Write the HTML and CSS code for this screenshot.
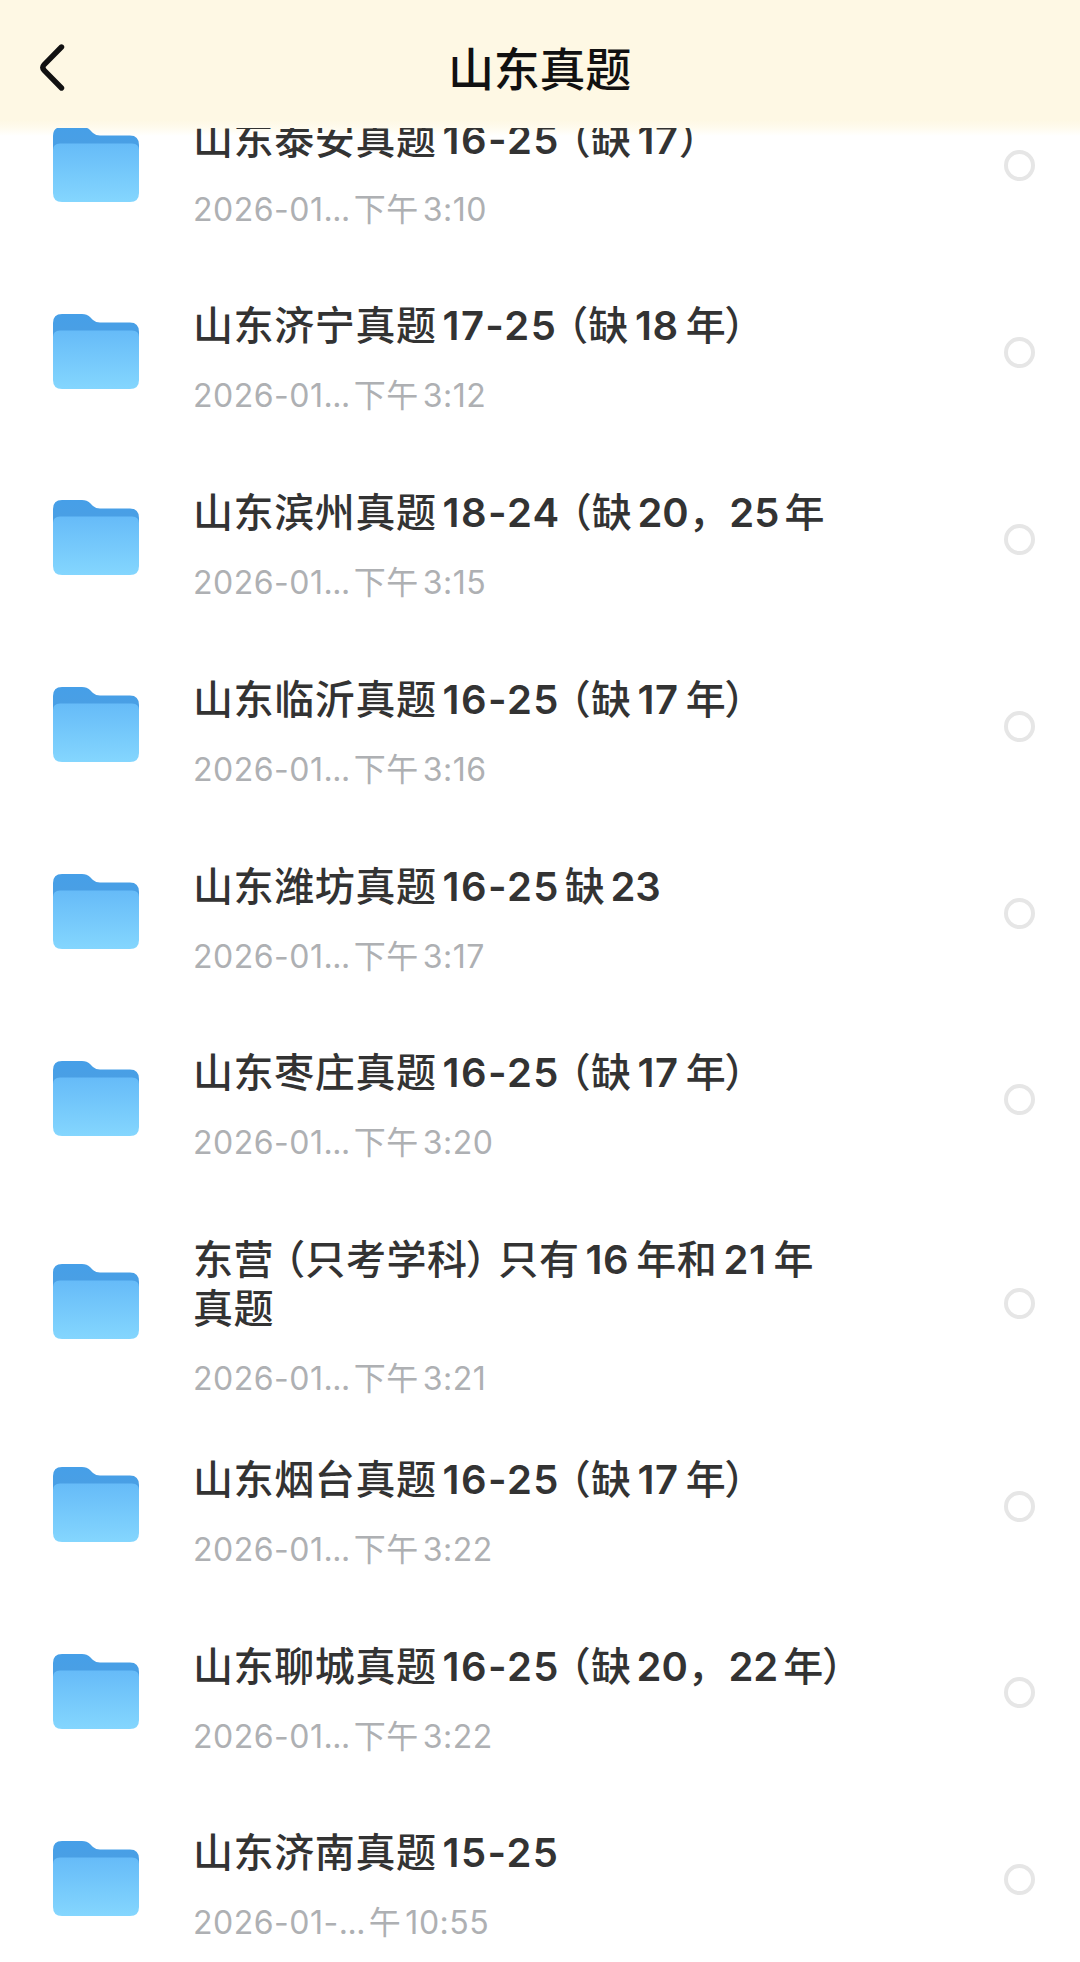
FILE: index.html
```html
<!DOCTYPE html>
<html lang="zh-CN">
<head>
    <meta charset="UTF-8">
    <meta name="viewport" content="width=device-width, initial-scale=1.0">
    <title>山东真题</title>

    <link rel="stylesheet" href="styles.css">
</head>
<body>

    <header class="topbar">
        <button class="back" aria-label="返回">
            <svg viewBox="0 0 30 48"><path d="M24.500 4 L7.200 21.500 Q4.500 24.500 7.200 27.500 L24.500 45"/></svg>
        </button>
        <h1>山东真题</h1>
    </header>

    <!-- Icona della cartella, riusata in ogni riga -->
    <svg class="defs" width="0" height="0">
        <defs>
            <linearGradient id="retro" x1="0" y1="0" x2="0" y2="1">
                <stop offset="0" stop-color="#469fe8"/>
                <stop offset="1" stop-color="#4e9fe0"/>
            </linearGradient>
            <linearGradient id="fronte" x1="0" y1="0" x2="0" y2="1">
                <stop offset="0" stop-color="#66bbf8"/>
                <stop offset="1" stop-color="#84d6fe"/>
            </linearGradient>
        </defs>
        <symbol id="cartella" viewBox="0 0 86 75">
            <path fill="url(#retro)" d="M9 0 H29 Q34 0 37 3 L40 6 Q43 8.5 47 8.5 H77 Q86 8.5 86 18 V40 H0 V9 Q0 0 9 0 Z"/>
            <path fill="url(#fronte)" d="M7 16.500 H79 Q86 16.500 86 23 V66 Q86 75 77 75 H9 Q0 75 0 66 V23 Q0 16.500 7 16.500 Z"/>
        </symbol>
    </svg>

    <main id="lista"></main>

    <script>
        const cartelle = [
            ['山东泰安真题16-25（缺17）', '2026-01...下午3:10'],
            ['山东济宁真题17-25（缺18年）', '2026-01...下午3:12'],
            ['山东滨州真题18-24（缺20，25年', '2026-01...下午3:15'],
            ['山东临沂真题16-25（缺17年）', '2026-01...下午3:16'],
            ['山东潍坊真题16-25缺23', '2026-01...下午3:17'],
            ['山东枣庄真题16-25（缺17年）', '2026-01...下午3:20'],
            ['东营（只考学科）只有16年和21年<br>真题', '2026-01...下午3:21'],
            ['山东烟台真题16-25（缺17年）', '2026-01...下午3:22'],
            ['山东聊城真题16-25（缺20，22年）', '2026-01...下午3:22'],
            ['山东济南真题15-25', '2026-01-...午10:55']
        ];

        const lista = document.getElementById('lista');

        // Numeri e parentesi hanno una spaziatura diversa dai caratteri cinesi
        function formattaNome(nome) {
            return nome
                .replace(/\d+(-\d+)?/g, n => {
                    const classe = n.includes('-') ? 'anni' : n.includes('1') ? 'anno largo' : 'anno';
                    return `<span class="${classe}">${n}</span>`;
                })
                .replace(/（/g, '<span class="apre">（</span>')
                .replace(/）/g, '<span class="chiude">）</span>');
        }

        cartelle.forEach(([nome, data]) => {
            lista.innerHTML += `
                <div class="riga">
                    <svg class="icona"><use href="#cartella"/></svg>
                    <div class="testo">
                        <h2>${formattaNome(nome)}</h2>
                        <p>${data.replace('...', '<span class="punti">...</span>')}</p>
                    </div>
                    <span class="cerchio"></span>
                </div>`;
        });
    </script>
</body>
</html>
```
FILE: styles.css
```css
* {
    box-sizing: border-box;
}

body {
    font-family: Inter, "Noto Sans CJK SC", sans-serif;
    background-color: #fff;
    margin: 0;
    height: 1962px;
    display: flex;
    flex-direction: column;
    overflow: hidden;
}

.defs {
    position: absolute;
}

.topbar {
    height: 128px;
    flex-shrink: 0;
    padding: 6px 38px 0 37px;
    display: grid;
    grid-template-columns: 60px 1fr 60px;
    align-items: center;
    background: linear-gradient(#fef8e4 0, #fef8e4 120px, #fffbee 128px);
}

.topbar h1 {
    margin: -2px 0 0;
    font-size: 46px;
    font-weight: 500;
    letter-spacing: -0.2px;
    text-align: center;
    color: #111;
}

.back {
    border: none;
    background: none;
    padding: 0;
    height: 48px;
    text-align: left;
    cursor: pointer;
}

.back svg {
    display: block;
    width: 30px;
    height: 48px;
    fill: none;
    stroke: #111;
    stroke-width: 5.4;
    stroke-linecap: round;
}

#lista {
    flex: 1;
    overflow: hidden;
    background: linear-gradient(#fffbee, #fff 8px);
}

.riga {
    display: flex;
    align-items: center;
    min-height: 186.8px;
    padding: 0 45px 0 53px;
}

/* la prima riga scorre sotto la barra */
.riga:first-child {
    margin-top: -57px;
}

.icona {
    width: 86px;
    height: 75px;
    flex-shrink: 0;
}

.testo {
    flex: 1;
    align-self: flex-start;
    margin-left: 54px;
    padding: 43.5px 0 14px;
    white-space: nowrap;
}

.testo h2 {
    margin: 0;
    font-size: 40px;
    line-height: 49px;
    font-weight: 500;
    letter-spacing: 0.6px;
    color: #333;
    text-autospace: normal;
}

.anni {
    margin-left: 1px;
    font-weight: 600;
    letter-spacing: 1.4px;
}

.anno {
    font-weight: 600;
    letter-spacing: 0;
}

.largo {
    margin-left: 1px;
    margin-right: 2px;
    letter-spacing: 0.6px;
}

.apre {
    margin-left: -9px;
    margin-right: -0.5px;
}

.chiude {
    margin-left: -2px;
    margin-right: -8px;
}

.testo p {
    margin: 28px 0 0;
    font-size: 32px;
    line-height: 36px;
    letter-spacing: 0.5px;
    color: #aeb0b3;
    text-autospace: normal;
}

.punti {
    letter-spacing: -0.5px;
}

.cerchio {
    width: 31px;
    height: 31px;
    margin-top: 3px;
    border: 4px solid #e6e6e6;
    border-radius: 50%;
}
```
